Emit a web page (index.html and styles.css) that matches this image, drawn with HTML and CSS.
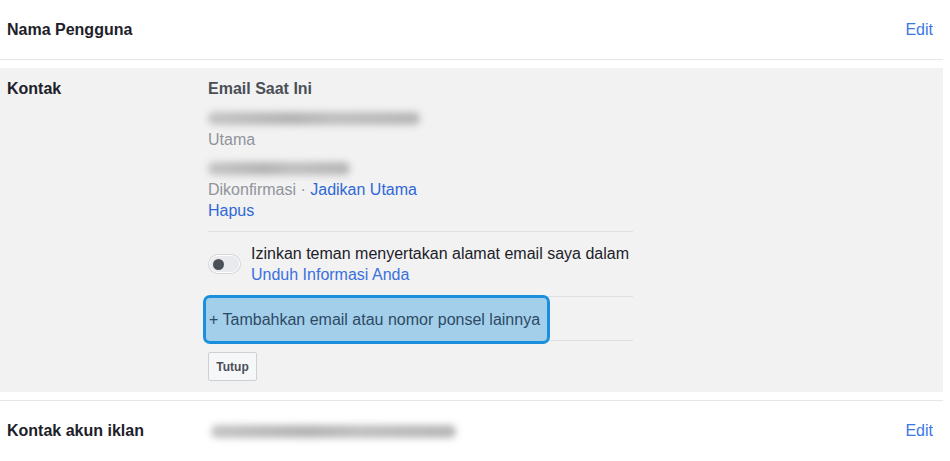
FILE: index.html
```html
<!DOCTYPE html>
<html lang="id">
<head>
    <meta charset="UTF-8">
    <title>Pengaturan Akun Umum</title>
    <link rel="stylesheet" href="styles.css">
</head>
<body>
    <div class="page">
        <div class="row">
            <div class="label">Nama Pengguna</div>
            <div class="value"></div>
            <a class="edit" href="#">Edit</a>
        </div>

        <div class="section">
            <div class="label">Kontak</div>
            <div class="content">
                <div class="heading">Email Saat Ini</div>

                <div class="mail first">
                    <div class="blur"><span class="blob w212"></span></div>
                    <div class="muted">Utama</div>
                </div>
                <div class="mail second">
                    <div class="blur"><span class="blob w142"></span></div>
                    <div class="muted">Dikonfirmasi · <a href="#">Jadikan Utama</a></div>
                    <div><a href="#">Hapus</a></div>
                </div>

                <div class="toggle-row">
                    <span class="toggle"><span class="knob"></span></span>
                    <div class="toggle-text">
                        Izinkan teman menyertakan alamat email saya dalam<br>
                        <a href="#">Unduh Informasi Anda</a>
                    </div>
                </div>

                <div class="add-row">
                    <a class="add-link" href="#">+ Tambahkan email atau nomor ponsel lainnya</a>
                </div>

                <button class="close-btn">Tutup</button>
            </div>
        </div>

        <div class="row last">
            <div class="label">Kontak akun iklan</div>
            <div class="value"><span class="blob w245"></span></div>
            <a class="edit" href="#">Edit</a>
        </div>
    </div>
</body>
</html>
```

FILE: styles.css
```css
body {
    margin: 0;
    background: #fff;
    font-family: "Liberation Sans", Arial, sans-serif;
    font-size: 16px;
    color: #1d2129;
}
a {
    color: #2f68d8;
    text-decoration: none;
}
.page {
    width: 943px;
}
.row {
    display: grid;
    grid-template-columns: 201px 1fr auto;
    align-items: center;
    height: 59px;
    padding: 0 10px 0 7px;
    border-bottom: 1px solid #e6e6e6;
}
.row.last {
    height: 60px;
    margin-top: 8px;
    border-top: 1px solid #e6e6e6;
    border-bottom: 1px solid #e6e6e6;
}
.label {
    font-weight: bold;
    line-height: 20px;
}
.edit {
    color: #3a78e6;
}
.section {
    display: grid;
    grid-template-columns: 201px 425px;
    background: #f2f2f2;
    margin-top: 8px;
    padding: 11px 0 11px 7px;
}
.heading {
    font-weight: bold;
    color: #4b4f56;
    line-height: 20px;
}
.mail {
    line-height: 21px;
}
.mail.first {
    margin-top: 9px;
}
.mail.second {
    margin-top: 8px;
    padding-bottom: 10px;
    border-bottom: 1px solid #dddfe2;
}
.muted {
    color: #90949c;
}
.blur {
    height: 21px;
    display: flex;
    align-items: center;
}
.blob {
    display: block;
    height: 13px;
    border-radius: 6px;
    background: linear-gradient(90deg, #c4c4c4, #b3b3b3 40%, #bfbfbf 60%, #b6b6b6);
    filter: blur(3.5px);
}
.w212 { width: 212px; }
.w142 { width: 142px; }
.w245 { width: 245px; }
.value .blob {
    margin-left: 3px;
}
.toggle-row {
    display: flex;
    gap: 11px;
    padding: 11px 0;
    border-bottom: 1px solid #dddfe2;
    line-height: 21px;
}
.toggle {
    flex: none;
    width: 26px;
    height: 16px;
    margin-top: 12px;
    border-radius: 9px;
    background: #e9eaed;
    border: 1px solid #fff;
    box-shadow: 0 0 0 1px #d4d6da;
    display: flex;
    align-items: center;
    padding-left: 3px;
    box-sizing: content-box;
    margin-left: 1px;
}
.knob {
    width: 11px;
    height: 11px;
    border-radius: 50%;
    background: #4b4f56;
}
.toggle-text {
    color: #1d2129;
}
.toggle-text a {
    color: #3a6fe0;
}
.add-row {
    border-bottom: 1px solid #dddfe2;
}
.add-link {
    display: block;
    width: fit-content;
    margin: -2px 0 -4px -5px;
    padding: 10px 7px 10px 3px;
    line-height: 23px;
    border: 3px solid #1b8fdb;
    border-radius: 7px;
    background: #a4cfea;
    color: #2c4a66;
    position: relative;
}
.close-btn {
    margin-top: 11px;
    height: 29px;
    width: 49px;
    padding: 0;
    font-family: "Liberation Sans", Arial, sans-serif;
    font-size: 12px;
    font-weight: bold;
    color: #4b4f56;
    background: #f6f7f9;
    border: 1px solid #ced0d4;
    border-radius: 2px;
}
```
